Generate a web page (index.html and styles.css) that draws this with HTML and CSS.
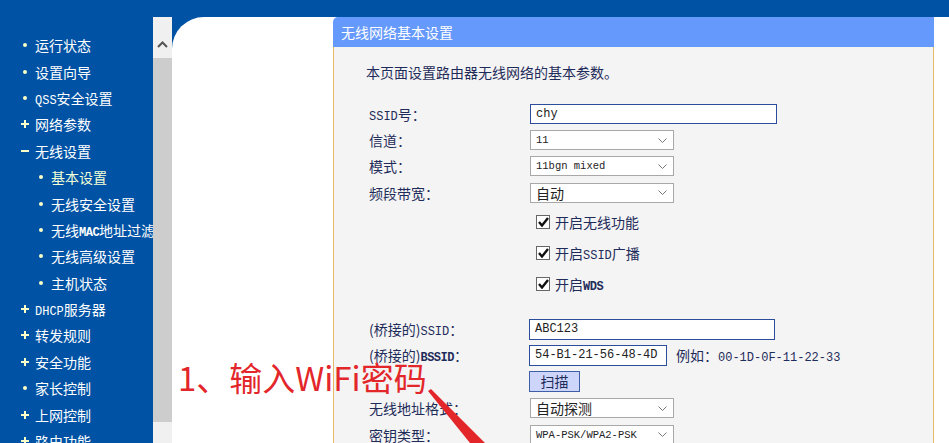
FILE: index.html
```html
<!DOCTYPE html>
<html lang="zh-CN">

<head>
    <meta charset="UTF-8">
    <meta name="viewport" content="width=device-width, initial-scale=1.0">
    <title>无线网络基本设置</title>

    <link rel="stylesheet" href="styles.css">
</head>

<body>

    <div class="topbar"></div>

    <div class="layout">
        <nav class="menu">
            <ul>
                <li class="item"><span class="mark dot"></span><span>运行状态</span></li>
                <li class="item"><span class="mark dot"></span><span>设置向导</span></li>
                <li class="item"><span class="mark dot"></span><span><span class="en">QSS</span>安全设置</span></li>
                <li class="item"><span class="mark plus"></span><span>网络参数</span></li>
                <li class="item"><span class="mark minus"></span><span>无线设置</span></li>
                <li class="item sub active"><span class="mark dot"></span><span>基本设置</span></li>
                <li class="item sub"><span class="mark dot"></span><span>无线安全设置</span></li>
                <li class="item sub"><span class="mark dot"></span><span>无线<span class="en bold">MAC</span>地址过滤</span></li>
                <li class="item sub"><span class="mark dot"></span><span>无线高级设置</span></li>
                <li class="item sub"><span class="mark dot"></span><span>主机状态</span></li>
                <li class="item"><span class="mark plus"></span><span><span class="en">DHCP</span>服务器</span></li>
                <li class="item"><span class="mark plus"></span><span>转发规则</span></li>
                <li class="item"><span class="mark plus"></span><span>安全功能</span></li>
                <li class="item"><span class="mark dot"></span><span>家长控制</span></li>
                <li class="item"><span class="mark plus"></span><span>上网控制</span></li>
                <li class="item"><span class="mark plus"></span><span>路由功能</span></li>
            </ul>
        </nav>

        <div class="scrollbar">
            <div class="scroll-up">
                <svg width="11" height="7" viewBox="0 0 11 7">
                    <polyline points="1,6 5.5,1.5 10,6" fill="none" stroke="#555" stroke-width="2" />
                </svg>
            </div>
            <div class="scroll-thumb"></div>
        </div>

        <main class="main">
            <section class="panel">
                <h2 class="panel-title">无线网络基本设置</h2>
                <div class="panel-body">
                    <p class="intro">本页面设置路由器无线网络的基本参数。</p>

                    <div class="form">
                        <div class="row">
                            <div class="label"><span class="en">SSID</span>号：</div>
                            <input class="text-input wide" type="text" value="chy">
                        </div>
                        <div class="row">
                            <div class="label">信道：</div>
                            <div class="select"><span class="en small">11</span>
                                <svg class="chev" width="9" height="5" viewBox="0 0 9 5"><polyline points="0.5,0.5 4.5,4.5 8.5,0.5" fill="none" stroke="#777" /></svg>
                            </div>
                        </div>
                        <div class="row">
                            <div class="label">模式：</div>
                            <div class="select"><span class="en small">11bgn mixed</span>
                                <svg class="chev" width="9" height="5" viewBox="0 0 9 5"><polyline points="0.5,0.5 4.5,4.5 8.5,0.5" fill="none" stroke="#777" /></svg>
                            </div>
                        </div>
                        <div class="row row-tall">
                            <div class="label">频段带宽：</div>
                            <div class="select"><span>自动</span>
                                <svg class="chev" width="9" height="5" viewBox="0 0 9 5"><polyline points="0.5,0.5 4.5,4.5 8.5,0.5" fill="none" stroke="#777" /></svg>
                            </div>
                        </div>

                        <div class="row row-check">
                            <div class="label"></div>
                            <label class="check"><span class="box"><svg width="11" height="10" viewBox="0 0 11 10"><polyline points="1,5 4,8.5 10,1" fill="none" stroke="#111" stroke-width="2.4" /></svg></span><span>开启无线功能</span></label>
                        </div>
                        <div class="row row-check">
                            <div class="label"></div>
                            <label class="check"><span class="box"><svg width="11" height="10" viewBox="0 0 11 10"><polyline points="1,5 4,8.5 10,1" fill="none" stroke="#111" stroke-width="2.4" /></svg></span><span>开启<span class="en">SSID</span>广播</span></label>
                        </div>
                        <div class="row row-check">
                            <div class="label"></div>
                            <label class="check"><span class="box"><svg width="11" height="10" viewBox="0 0 11 10"><polyline points="1,5 4,8.5 10,1" fill="none" stroke="#111" stroke-width="2.4" /></svg></span><span>开启<span class="en bold">WDS</span></span></label>
                        </div>

                        <div class="spacer"></div>

                        <div class="row">
                            <div class="label">(桥接的)<span class="en">SSID</span>：</div>
                            <input class="text-input bridge" type="text" value="ABC123">
                        </div>
                        <div class="row">
                            <div class="label">(桥接的)<span class="en bold">BSSID</span>：</div>
                            <input class="text-input mac" type="text" value="54-B1-21-56-48-4D">
                            <span class="hint">例如：<span class="en">00-1D-0F-11-22-33</span></span>
                        </div>
                        <div class="row row-tall">
                            <div class="label"></div>
                            <button class="scan">扫描</button>
                        </div>
                        <div class="row">
                            <div class="label">无线地址格式：</div>
                            <div class="select"><span>自动探测</span>
                                <svg class="chev" width="9" height="5" viewBox="0 0 9 5"><polyline points="0.5,0.5 4.5,4.5 8.5,0.5" fill="none" stroke="#777" /></svg>
                            </div>
                        </div>
                        <div class="row row-tall">
                            <div class="label">密钥类型：</div>
                            <div class="select"><span class="en small">WPA-PSK/WPA2-PSK</span>
                                <svg class="chev" width="9" height="5" viewBox="0 0 9 5"><polyline points="0.5,0.5 4.5,4.5 8.5,0.5" fill="none" stroke="#777" /></svg>
                            </div>
                        </div>
                    </div>
                </div>
            </section>

            <!-- 截图上的标注 -->
            <div class="note">1、输入WiFi密码</div>
            <svg class="arrow" width="777" height="426" viewBox="0 0 777 426">
                <polygon points="256,374 259,372 313,426 298,426" fill="#e3262a" />
            </svg>
        </main>
    </div>

</body>

</html>
```

FILE: styles.css
```css
body,
html {
    height: 100%;
    margin: 0;
    overflow: hidden;
}

body {
    font-family: "Noto Sans CJK SC", sans-serif;
    font-size: 14px;
    background-color: #0052a4;
}

.topbar {
    height: 17px;
    background-color: #0052a4;
}

.layout {
    display: flex;
    height: calc(100vh - 17px);
}

/* 左侧菜单 */
.menu {
    width: 153px;
    flex-shrink: 0;
    overflow: hidden;
    padding-top: 15px;
    box-sizing: border-box;
}

.menu ul {
    list-style: none;
    margin: 0;
    padding: 0;
}

.menu .item {
    display: flex;
    align-items: center;
    height: 26.4px;
    padding-left: 20px;
    color: #fff;
    white-space: nowrap;
}

.menu .item.sub {
    padding-left: 36px;
}

.menu .item.active {
    color: #f2ffd6;
}

.mark {
    width: 10px;
    height: 10px;
    margin-right: 5px;
    flex-shrink: 0;
    position: relative;
}

.mark.dot::before {
    content: "";
    position: absolute;
    left: 3px;
    top: 3px;
    width: 4px;
    height: 4px;
    border-radius: 50%;
    background-color: #fbffc8;
}

.mark.plus::before,
.mark.plus::after,
.mark.minus::before {
    content: "";
    position: absolute;
    background-color: #fbffc8;
}

.mark.plus::before,
.mark.minus::before {
    left: 1px;
    top: 4px;
    width: 8px;
    height: 2px;
}

.mark.plus::after {
    left: 4px;
    top: 1px;
    width: 2px;
    height: 8px;
}

.en {
    font-family: "Liberation Mono", monospace;
    font-size: 12px;
}

.en.bold {
    font-weight: bold;
    letter-spacing: -0.5px;
}

.en.small {
    font-size: 10.5px;
}

/* 滚动条 */
.scrollbar {
    width: 19px;
    flex-shrink: 0;
    background-color: #f0f0f0;
    display: flex;
    flex-direction: column;
}

.scroll-up {
    height: 41px;
    display: flex;
    justify-content: center;
    padding-top: 24px;
    box-sizing: border-box;
}

.scroll-thumb {
    height: 364px;
    background-color: #cdcdcd;
}

/* 主区域 */
.main {
    flex: 1;
    position: relative;
    background-color: #fff;
    border-top-left-radius: 32px;
    overflow: hidden;
}

.panel {
    margin-left: 161px;
    width: 601px;
    height: 100%;
    display: flex;
    flex-direction: column;
}

.panel-title {
    margin: 0;
    height: 30px;
    line-height: 30px;
    padding-left: 8px;
    font-size: 14px;
    font-weight: normal;
    color: #fff;
    background-color: #6699fc;
    border-top-left-radius: 5px;
}

.panel-body {
    flex: 1;
    background-color: #f4f4f4;
    border-left: 1px solid #e6b86a;
    border-right: 1px solid #e6b86a;
    padding-top: 15px;
    color: #1f2c5a;
}

.intro {
    margin: 0 0 19px 32px;
    height: 20px;
    line-height: 20px;
}

.form {
    margin-left: 35px;
}

.row {
    display: flex;
    align-items: center;
    height: 26px;
}

.row-tall {
    height: 27px;
}

.row-check {
    height: 31px;
}

.spacer {
    height: 17px;
}

.label {
    width: 161px;
    flex-shrink: 0;
    white-space: nowrap;
}

.text-input {
    box-sizing: border-box;
    height: 21px;
    margin: 0;
    padding: 0 5px;
    border: 1px solid #2c4c9c;
    background-color: #fff;
    font-family: "Liberation Mono", monospace;
    font-size: 12px;
    color: #222;
    outline: none;
}

.text-input.wide {
    width: 247px;
    height: 20px;
    border-width: 1.5px;
}

.text-input.bridge {
    width: 246px;
    margin-left: -1px;
}

.text-input.mac {
    width: 138px;
    margin-left: -1px;
}

.hint {
    margin-left: 9px;
    white-space: nowrap;
}

.select {
    box-sizing: border-box;
    width: 144px;
    height: 20px;
    padding: 0 6px 0 5px;
    border: 1px solid #a8a8a8;
    background-color: #fff;
    display: flex;
    align-items: center;
    justify-content: space-between;
    color: #222;
    line-height: 18px;
}

.check {
    display: flex;
    align-items: center;
    margin-left: 6px;
}

.check .box {
    box-sizing: border-box;
    width: 14px;
    height: 14px;
    margin-right: 5px;
    border: 1px solid #666;
    background-color: #fff;
    display: flex;
    align-items: center;
    justify-content: center;
}

.scan {
    box-sizing: border-box;
    width: 51px;
    height: 21px;
    margin-left: -1px;
    padding: 0;
    border: 1px solid #3f5ea8;
    background-color: #cdd6fa;
    font-family: "Noto Sans CJK SC", sans-serif;
    font-size: 14px;
    line-height: 19px;
    color: #1f2c5a;
}

/* 红色标注 */
.note {
    position: absolute;
    left: 6px;
    top: 344px;
    height: 33px;
    line-height: 33px;
    font-size: 33px;
    color: #e3262a;
    white-space: nowrap;
}

.arrow {
    position: absolute;
    left: 0;
    top: 0;
}
```
